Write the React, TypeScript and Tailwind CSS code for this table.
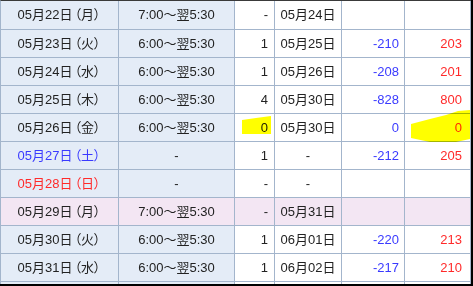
import React from 'react';

type Row = {
  day: string;
  wd: string;
  dateColor?: string;
  hours: string;
  count: string;
  due: string;
  minus: string;
  plus: string;
  pink?: boolean;
};

const rows: Row[] = [
  { day: '05月22日', wd: '月', hours: '7:00～翌5:30', count: '-', due: '05月24日', minus: '', plus: '' },
  { day: '05月23日', wd: '火', hours: '6:00～翌5:30', count: '1', due: '05月25日', minus: '-210', plus: '203' },
  { day: '05月24日', wd: '水', hours: '6:00～翌5:30', count: '1', due: '05月26日', minus: '-208', plus: '201' },
  { day: '05月25日', wd: '木', hours: '6:00～翌5:30', count: '4', due: '05月30日', minus: '-828', plus: '800' },
  { day: '05月26日', wd: '金', hours: '6:00～翌5:30', count: '0', due: '05月30日', minus: '0', plus: '0' },
  { day: '05月27日', wd: '土', dateColor: 'text-[#3a3aff]', hours: '-', count: '1', due: '-', minus: '-212', plus: '205' },
  { day: '05月28日', wd: '日', dateColor: 'text-[#ff2a2a]', hours: '-', count: '-', due: '-', minus: '', plus: '' },
  { day: '05月29日', wd: '月', hours: '7:00～翌5:30', count: '-', due: '05月31日', minus: '', plus: '', pink: true },
  { day: '05月30日', wd: '火', hours: '6:00～翌5:30', count: '1', due: '06月01日', minus: '-220', plus: '213' },
  { day: '05月31日', wd: '水', hours: '6:00～翌5:30', count: '1', due: '06月02日', minus: '-217', plus: '210' },
  // next row, only its top edge shows
  { day: '', wd: '', hours: '', count: '', due: '', minus: '', plus: '' },
];

export default function App() {
  return (
    <div className="relative w-[473px] h-[286px] overflow-hidden bg-white border-r-2 border-b-2 border-black text-[13px] text-[#222] font-['Liberation_Sans','Noto_Sans_CJK_JP',sans-serif] [font-feature-settings:'palt']">
      <div className="border-t border-[#3a3a3a] border-l border-l-[#a3b5cc]">
        {rows.map((r, i) => {
          const left = r.pink ? 'bg-[#f3e6f3]' : 'bg-[#e4ecf7]';
          const right = r.pink ? 'bg-[#f3e6f3]' : 'bg-white';
          return (
            <div
              key={i}
              className={`flex border-b border-[#a3b5cc] ${i === 0 ? 'h-[29px]' : 'h-[28px]'}`}
            >
              <div className={`w-[118px] shrink-0 flex items-center justify-center border-r border-[#a3b5cc] ${left} ${r.dateColor ?? ''}`}>
                {r.day && (
                  <span>
                    {r.day}
                    <span className="ml-[2px]">（</span>
                    {r.wd}
                    <span className="mr-[1px]">）</span>
                  </span>
                )}
              </div>
              <div className={`w-[116px] shrink-0 flex items-center justify-center border-r border-[#a3b5cc] ${left}`}>
                {r.hours}
              </div>
              <div className={`w-[40px] shrink-0 flex items-center justify-end pr-[6px] border-r border-[#a3b5cc] ${right}`}>
                {r.count}
              </div>
              <div className={`w-[67px] shrink-0 flex items-center justify-center border-r border-[#a3b5cc] ${right}`}>
                {r.due}
              </div>
              <div className={`w-[63px] shrink-0 flex items-center justify-end pr-[5px] border-r border-[#a3b5cc] text-[#3a3aff] ${right}`}>
                {r.minus}
              </div>
              <div className={`w-[66px] shrink-0 flex items-center justify-end pr-[8px] border-r border-[#a3b5cc] text-[#ff2a2a] ${right}`}>
                {r.plus}
              </div>
            </div>
          );
        })}
      </div>

      {/* highlighter marks */}
      <svg className="absolute inset-0 pointer-events-none mix-blend-multiply" width="473" height="286">
        <polygon points="242,120 256,118 271,116 271,134 256,134 242,134" fill="#ffff00" />
        <polygon points="411,124 430,119 446,115 458,111 470,110 470,139 456,142 430,142 411,138" fill="#ffff00" />
      </svg>
    </div>
  );
}
